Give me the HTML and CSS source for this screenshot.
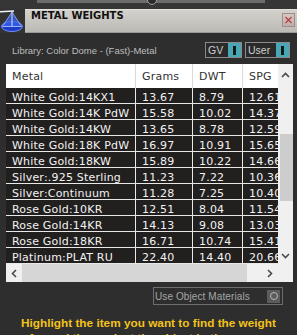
FILE: index.html
```html
<!DOCTYPE html>
<html>
<head>
<meta charset="utf-8">
<link rel="stylesheet" href="styles.css">
</head>
<body>
<div class="topstrip"><div class="rail"></div><div class="knob"></div></div>
<div class="titlerow">
  <div class="appicon">
    <svg width="25" height="24" viewBox="0 0 25 24">
      <ellipse cx="12" cy="17.5" rx="10.5" ry="5" fill="#1d3cc0" stroke="#6f8cff" stroke-width="1"/>
      <path d="M12 3 L2.5 17.5 L21.5 17.5 Z" fill="#3a64ec" fill-opacity="0.75" stroke="#9fb4ff" stroke-width="0.8"/>
      <line x1="0" y1="2.8" x2="14" y2="2" stroke="#eef3ff" stroke-width="1.6"/>
      <line x1="12" y1="2.5" x2="12" y2="17.5" stroke="#cfe0ff" stroke-width="1"/>
      <line x1="2.5" y1="17.5" x2="21.5" y2="17.5" stroke="#9fb4ff" stroke-width="0.8"/>
    </svg>
  </div>
  <div class="titlebar">
    <span class="title">METAL WEIGHTS</span>
    <span class="close">
      <svg width="11" height="12" viewBox="0 0 11 12"><path d="M2.5 3 L8.5 9 M8.5 3 L2.5 9" stroke="#b23a3a" stroke-width="1.1"/></svg>
    </span>
  </div>
</div>
<div class="toolbar">
  <span class="library">Library: Color Dome - (Fast)-Metal</span>
  <div class="toggles">
    <div class="toggle gv"><span>GV</span><span class="switch"><i></i></span></div>
    <div class="toggle user"><span>User</span><span class="switch"><i></i></span></div>
  </div>
</div>
<div class="table-frame">
  <div class="table-view">
    <div class="row head"><div class="cell">Metal</div><div class="cell">Grams</div><div class="cell">DWT</div><div class="cell">SPG</div></div>
    <div class="row"><div class="cell">White Gold:14KX1</div><div class="cell">13.67</div><div class="cell">8.79</div><div class="cell">12.61</div></div>
    <div class="row"><div class="cell">White Gold:14K PdW</div><div class="cell">15.58</div><div class="cell">10.02</div><div class="cell">14.37</div></div>
    <div class="row"><div class="cell">White Gold:14KW</div><div class="cell">13.65</div><div class="cell">8.78</div><div class="cell">12.59</div></div>
    <div class="row"><div class="cell">White Gold:18K PdW</div><div class="cell">16.97</div><div class="cell">10.91</div><div class="cell">15.65</div></div>
    <div class="row"><div class="cell">White Gold:18KW</div><div class="cell">15.89</div><div class="cell">10.22</div><div class="cell">14.66</div></div>
    <div class="row"><div class="cell">Silver:.925 Sterling</div><div class="cell">11.23</div><div class="cell">7.22</div><div class="cell">10.36</div></div>
    <div class="row"><div class="cell">Silver:Continuum</div><div class="cell">11.28</div><div class="cell">7.25</div><div class="cell">10.40</div></div>
    <div class="row"><div class="cell">Rose Gold:10KR</div><div class="cell">12.51</div><div class="cell">8.04</div><div class="cell">11.54</div></div>
    <div class="row"><div class="cell">Rose Gold:14KR</div><div class="cell">14.13</div><div class="cell">9.08</div><div class="cell">13.03</div></div>
    <div class="row"><div class="cell">Rose Gold:18KR</div><div class="cell">16.71</div><div class="cell">10.74</div><div class="cell">15.41</div></div>
    <div class="row"><div class="cell">Platinum:PLAT RU</div><div class="cell">22.40</div><div class="cell">14.40</div><div class="cell">20.66</div></div>
  </div>
  <div class="vscroll">
    <div class="vbtn up"><svg width="9" height="6" viewBox="0 0 9 6"><path d="M1 5 L4.5 1.5 L8 5" fill="none" stroke="#4a4a4a" stroke-width="1.6"/></svg></div>
    <div class="vtrack"><div class="vthumb"></div></div>
    <div class="vbtn down"><svg width="9" height="6" viewBox="0 0 9 6"><path d="M1 1 L4.5 4.5 L8 1" fill="none" stroke="#4a4a4a" stroke-width="1.6"/></svg></div>
  </div>
  <div class="hscroll">
    <div class="hbtn"><svg width="6" height="9" viewBox="0 0 6 9"><path d="M5 1 L1.5 4.5 L5 8" fill="none" stroke="#4a4a4a" stroke-width="1.6"/></svg></div>
    <div class="htrack"><div class="hthumb"></div></div>
    <div class="hbtn"><svg width="6" height="9" viewBox="0 0 6 9"><path d="M1 1 L4.5 4.5 L1 8" fill="none" stroke="#4a4a4a" stroke-width="1.6"/></svg></div>
    <div class="corner"></div>
  </div>
</div>
<div class="options">
  <div class="field"><span>Use Object Materials</span><span class="radio"><i></i></span></div>
</div>
<p class="hint">Highlight the item you want to find the weight<br>for and then select the object in the scene.</p>
</body>
</html>
```
FILE: styles.css
```css
html, body {
  margin: 0;
  padding: 0;
}
body {
  background: #2e2e2e;
  width: 297px;
  height: 335px;
  overflow: hidden;
  font-family: "DejaVu Sans", sans-serif;
}

.topstrip {
  position: relative;
  height: 9px;
  background: #363636;
}
.rail {
  margin-left: 37px;
  width: 228px;
  height: 3px;
  background: #6c6c6c;
}
.knob {
  position: absolute;
  left: 147px;
  top: -5px;
  width: 8px;
  height: 8px;
  border-radius: 50%;
  border: 1px solid #a0a0a0;
  background: #2a2a2a;
}

.titlerow {
  display: flex;
  height: 24px;
}
.appicon {
  width: 25px;
  flex: none;
  background: #333;
  display: flex;
}
.titlebar {
  flex: 1;
  display: flex;
  justify-content: space-between;
  align-items: flex-start;
  box-sizing: border-box;
  background: linear-gradient(#d3d1cb, #bcbab4);
  border-top: 1px solid #e2e0da;
  border-bottom: 1px solid #9c9a95;
  padding: 0 2px 0 6px;
}
.title {
  font: bold 10px/12px "DejaVu Sans", sans-serif;
  color: #111;
}
.close {
  margin-top: 3px;
  width: 11px;
  height: 12px;
  border: 1px solid #9d8e8a;
  background: linear-gradient(#d8c6c2, #bfaeaa);
  display: flex;
}

.toolbar {
  display: flex;
  justify-content: space-between;
  align-items: center;
  height: 16px;
  padding: 9px 7px 6px 12px;
}
.library {
  font: 9.5px "Liberation Sans", sans-serif;
  color: #bdbdbd;
}
.toggles {
  display: flex;
  gap: 3px;
}
.toggle {
  display: flex;
  align-items: center;
  justify-content: space-between;
  box-sizing: border-box;
  height: 16px;
  border: 1px solid #8a8a8a;
  background: #2a2a2a;
  padding: 0 0 0 2px;
  font: 10.5px "Liberation Sans", sans-serif;
  color: #cfcfcf;
}
.toggle.gv { width: 37px; }
.toggle.user { width: 45px; }
.switch {
  width: 13px;
  height: 14px;
  background: #47a7b5;
  display: flex;
  align-items: center;
  justify-content: center;
}
.switch i {
  display: block;
  width: 3px;
  height: 9px;
  background: #171717;
}

.table-frame {
  margin: 0 4px 0 6px;
  display: grid;
  grid-template-columns: 1fr 15px;
  grid-template-rows: 200px 18px;
  background: #f0f0f0;
}
.table-view {
  overflow: hidden;
  background: #221f1f;
}
.row {
  display: grid;
  grid-template-columns: 130px 57px 50px 60px;
  border-bottom: 1px solid #e8e8e8;
  font: 11px "DejaVu Sans", sans-serif;
  letter-spacing: 0.2px;
  color: #f2f2f2;
}
.cell {
  box-sizing: border-box;
  height: 15px;
  padding: 3px 0 0 6px;
  line-height: 13px;
  white-space: nowrap;
  overflow: hidden;
  border-right: 1px solid #e8e8e8;
}
.row.head {
  background: #fff;
  color: #333;
  border-bottom: none;
}
.row.head .cell {
  height: 24px;
  padding-top: 2px;
  line-height: 22px;
  border-right-color: #dadada;
}

.vscroll {
  display: flex;
  flex-direction: column;
  background: #f0f0f0;
}
.vbtn {
  display: flex;
  align-items: center;
  justify-content: center;
}
.vbtn.up { height: 21px; }
.vbtn.down { height: 16px; }
.vtrack {
  flex: 1;
}
.vthumb {
  margin: 49px 0 0 2px;
  height: 67px;
  background: #cdcdcd;
}

.hscroll {
  grid-column: 1 / 3;
  display: flex;
  background: #f0f0f0;
}
.hbtn {
  width: 16px;
  display: flex;
  align-items: center;
  justify-content: center;
}
.htrack {
  flex: 1;
}
.hthumb {
  width: 225px;
  height: 18px;
  background: #d6d6d6;
}
.corner {
  width: 15px;
}

.options {
  display: flex;
  justify-content: flex-end;
  padding: 5px 14px 0 0;
}
.field {
  width: 130px;
  height: 18px;
  box-sizing: border-box;
  border: 1px solid #6e6e6e;
  display: flex;
  align-items: center;
  justify-content: space-between;
  padding: 0 2px 0 1px;
  font: 10px "Liberation Sans", sans-serif;
  letter-spacing: 0.1px;
  color: #a6a6a6;
}
.radio {
  width: 13px;
  height: 13px;
  background: #5c5c5c;
  display: flex;
  align-items: center;
  justify-content: center;
}
.radio i {
  display: block;
  width: 6px;
  height: 6px;
  border: 1px solid #b4b4b4;
  border-radius: 50%;
}

.hint {
  margin: 11px 0 0;
  text-align: center;
  font: bold 11.8px/15px "Liberation Sans", sans-serif;
  color: #f2c21b;
}
```
